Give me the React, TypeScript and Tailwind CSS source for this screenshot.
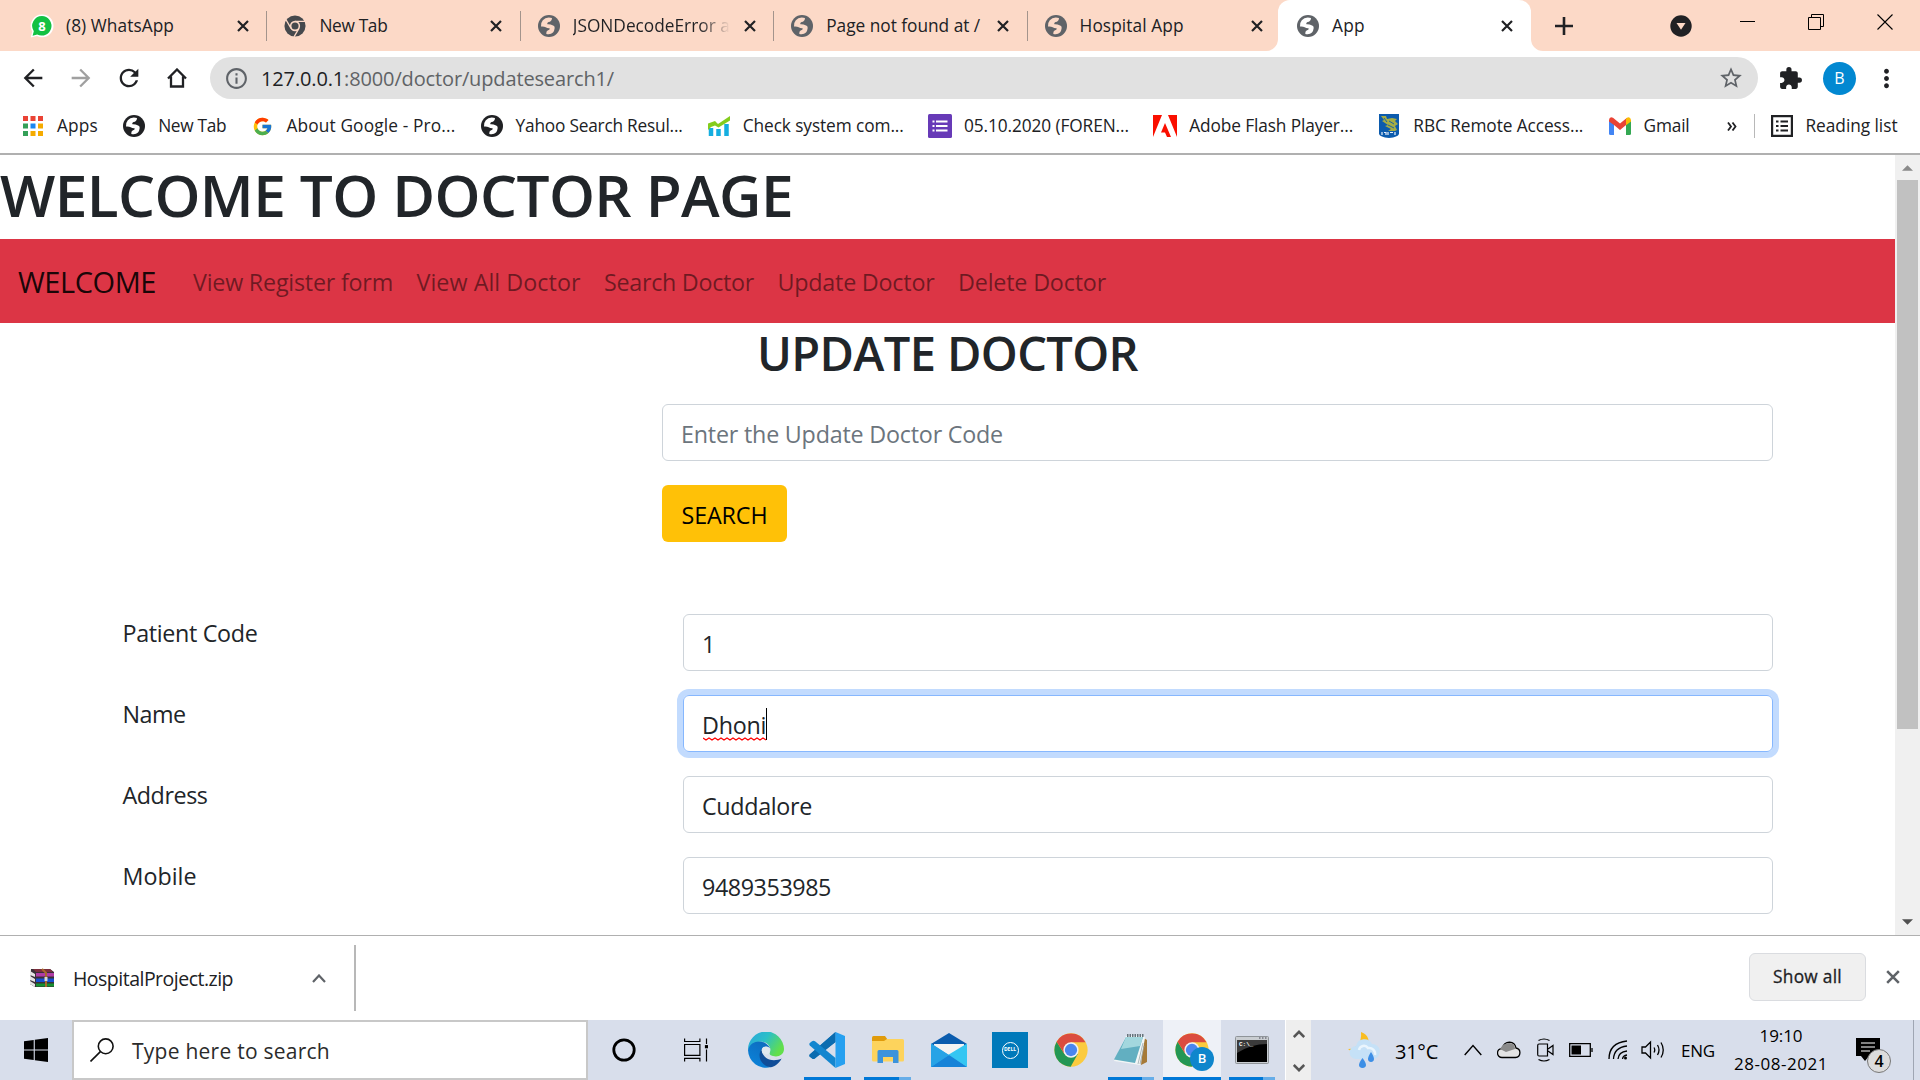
import React, { useLayoutEffect, useRef, useState } from "react";
import { MdExtension, MdStarBorder, MdInfoOutline, MdArrowBack, MdArrowForward, MdRefresh, MdMoreVert } from "react-icons/md";
import { FcGoogle } from "react-icons/fc";

/** Single line of text whose tracking is adjusted so that it fills `w` pixels. */
function Fit({ text, w, className = "" }: { text: React.ReactNode; w: number; className?: string }) {
  const ref = useRef<HTMLSpanElement>(null);
  const [tracking, setTracking] = useState(0);
  useLayoutEffect(() => {
    const el = ref.current;
    if (!el) return;
    const n = (el.textContent || "").length;
    setTracking((w - el.getBoundingClientRect().width) / n);
  }, []);
  return (
    <span className={`block shrink-0 whitespace-nowrap ${className}`} style={{ width: w }}>
      <span ref={ref} className="inline-block" style={{ letterSpacing: tracking }}>
        {text}
      </span>
    </span>
  );
}

function Cross({ className }: { className: string }) {
  return (
    <svg viewBox="0 0 12 12" className={className} fill="none" stroke="currentColor">
      <path d="M1 1 11 11M11 1 1 11" />
    </svg>
  );
}

function Globe({ className, land }: { className: string; land: string }) {
  return (
    <svg viewBox="0 0 24 24" className={`h-6 w-6 shrink-0 ${className}`}>
      <circle cx="12" cy="12" r="11" fill="currentColor" />
      <path d="M15 4Q9 2.500 5.800 6.200 3.500 9 4 12.500 7 12.200 8.700 13.300 10.300 14.500 12.700 14.300 13 16 10.600 16.600 9 17.300 9.300 20 13.500 21 16 18.600 17.300 17 17.600 14.500 18 11.800 15.500 11.200 13.500 10 10.400 10.200 9.600 9 11.500 8 14.800 7.700 15 4Z" fill={land} />
    </svg>
  );
}

function WhatsApp() {
  return (
    <svg viewBox="0 0 24 24" className="h-6 w-6 shrink-0">
      <path d="M12 .5A11.3 11.3 0 0 1 23.500 12 11.300 11.300 0 0 1 12 23.200a11 11 0 0 1-5-1.200L.8 23.500 2.200 17.500A11.300 11.300 0 0 1 12 .5Z" fill="#fff" />
      <path d="M12 2a9.800 9.800 0 1 1-4.800 18.500L2.600 21.700 3.800 17.200A9.800 9.800 0 0 1 12 2Z" fill="#12c143" />
      <text x="12" y="16.600" textAnchor="middle" fontSize="13" fontWeight="700" fill="#fff" fontFamily="Open Sans, sans-serif">8</text>
    </svg>
  );
}

function ChromeMono() {
  return (
    <svg viewBox="0 0 24 24" className="h-[22px] w-[22px] shrink-0">
      <circle cx="12" cy="12" r="11.500" fill="#46494d" />
      <circle cx="12" cy="12" r="5.600" fill="#fcd9c7" />
      <circle cx="12" cy="12" r="3.900" fill="#46494d" />
      <path d="M12 7h11M7.700 14.500 2.200 5.200M16.300 14.500 11 23.700" stroke="#fcd9c7" strokeWidth="1.500" />
    </svg>
  );
}

function Chrome({ className }: { className: string }) {
  return (
    <svg viewBox="0 0 48 48" className={className}>
      <circle cx="24" cy="24" r="23.500" fill="#fbcb3f" />
      <path d="M3.700 12.200A23.500 23.500 0 0 0 23.500 47.500L33.600 29.600 24 24 14.500 29.200Z" fill="#239754" />
      <path d="M3.700 12.200A23.500 23.500 0 0 1 44.500 12.900H24L14.600 29.200Z" fill="#db4c3f" />
      <circle cx="24" cy="24" r="10.800" fill="#f1f1f1" />
      <circle cx="24" cy="24" r="8.700" fill="#4a86ee" />
    </svg>
  );
}

const tabGlobe = <Globe className="-mx-px text-[#5f6368]" land="#fcd9c7" />;

const tabs = [
  { title: "(8) WhatsApp", w: 108, icon: <WhatsApp /> },
  { title: "New Tab", w: 68, icon: <ChromeMono /> },
  { title: "JSONDecodeError a", w: 157, icon: tabGlobe, fade: true },
  { title: "Page not found at /", w: 154, icon: tabGlobe },
  { title: "Hospital App", w: 104, icon: tabGlobe },
];

function TabStrip() {
  return (
    <div className="flex h-[51px] w-full items-center bg-[#fcd9c7] pl-[14px] text-[17.300px] text-[#202124]">
      {tabs.map((t, i) => (
        <div key={t.title} className="flex h-full w-[253.400px] shrink-0 items-center">
          <div className="ml-[17px] flex w-[22px] justify-center">{t.icon}</div>
          <div className="ml-[13px] flex w-[168px]">
            <Fit
              text={t.title}
              w={t.w}
              className={t.fade ? "bg-linear-to-r from-[#202124] from-80% to-[#fcd9c7] bg-clip-text text-transparent" : ""}
            />
          </div>
          <Cross className="ml-[3px] h-3 w-3 stroke-[2.200]" />
          {i < 4 && <div className="ml-auto h-[30px] w-px bg-[#a3948c]" />}
        </div>
      ))}
      <div className="relative -ml-[3px] flex h-full w-[253px] shrink-0 items-center rounded-t-[12px] bg-white">
        <svg viewBox="0 0 12 12" className="absolute bottom-0 -left-3 h-3 w-3"><path d="M12 0v12H0A12 12 0 0 0 12 0" fill="#fff" /></svg>
        <svg viewBox="0 0 12 12" className="absolute -right-3 bottom-0 h-3 w-3"><path d="M0 0v12h12A12 12 0 0 1 0 0" fill="#fff" /></svg>
        <Globe className="ml-[18px] text-[#5f6368]" land="#fff" />
        <Fit text="App" w={33} className="ml-[12px]" />
        <Cross className="ml-[136px] h-3 w-3 stroke-[2.200]" />
      </div>
      <svg viewBox="0 0 18 18" className="ml-[24px] h-[18px] w-[18px]" stroke="#202124" strokeWidth="2.600"><path d="M9 0v18M0 9h18" /></svg>
      <svg viewBox="0 0 22 22" className="ml-[97px] h-[22px] w-[22px]">
        <circle cx="11" cy="11" r="10.700" fill="#202124" />
        <path d="M6.500 8h9L11 14.800Z" fill="#fcd9c7" />
      </svg>
      <svg viewBox="0 0 15 15" className="mb-2 ml-[48px] h-[15px] w-[15px]" stroke="#000"><path d="M0 7.500h15" /></svg>
      <svg viewBox="0 0 16 16" className="mb-2 ml-[53px] h-4 w-4" fill="none" stroke="#000"><path d="M.5 3.500h12v12H.5ZM3.500 3.500v-3h12v12h-3" /></svg>
      <svg viewBox="0 0 16 16" className="mb-2 ml-[53px] h-4 w-4" stroke="#000" strokeWidth="1.100"><path d="M.5.5l15 15M15.500.5l-15 15" /></svg>
    </div>
  );
}

function Toolbar() {
  return (
    <div className="flex h-[54px] w-full items-center text-[#202124]">
      <MdArrowBack className="ml-[19px] h-7 w-7" />
      <MdArrowForward className="ml-5 h-7 w-7 text-[#a0a0a0]" />
      <MdRefresh className="ml-[20px] h-7 w-7" />
      <svg viewBox="0 0 20 20" className="ml-[24px] h-5 w-5" fill="none" stroke="currentColor" strokeWidth="2.300"><path d="M1 10.500 10 1.500l9 9M4 8.500v10h12v-10" /></svg>
      <div className="ml-[23px] flex h-[42px] w-[1548px] items-center rounded-full bg-[#e1e1e1]">
        <MdInfoOutline className="ml-[14px] h-[25px] w-[25px] text-[#5f6368]" />
        <Fit
          text={<>127.0.0.1<span className="text-[#606366]">:8000/doctor/updatesearch1/</span></>}
          w={353}
          className="ml-[12px] pt-[2px] text-[20px]"
        />
        <MdStarBorder className="mr-[14px] ml-auto h-[26px] w-[26px] text-[#5f6368]" />
      </div>
      <MdExtension className="ml-[20px] h-[25px] w-[25px]" />
      <div className="ml-[20px] flex h-[33px] w-[33px] items-center justify-center rounded-full bg-[#0288d1] text-[16px] text-white">B</div>
      <MdMoreVert className="ml-[16px] h-[29px] w-[29px]" />
    </div>
  );
}

const appColors = ["#ea4335", "#ea4335", "#ea4335", "#34a058", "#1a86f0", "#f5ab00", "#34a058", "#f5ab00", "#f5ab00"];

const bookmarks = [
  {
    title: "Apps", w: 41,
    icon: <svg viewBox="0 0 20 20" className="h-5 w-5">{appColors.map((c, i) => <rect key={i} x={(i % 3) * 7.500} y={Math.floor(i / 3) * 7.500} width="5" height="5" fill={c} />)}</svg>,
  },
  { title: "New Tab", w: 68, icon: <Globe className="text-[#202124]" land="#fff" /> },
  { title: "About Google - Pro...", w: 169, icon: <FcGoogle className="h-[21px] w-[21px]" /> },
  { title: "Yahoo Search Resul...", w: 167, icon: <Globe className="text-[#202124]" land="#fff" /> },
  {
    title: "Check system com...", w: 161,
    icon: <svg viewBox="0 0 22 20" className="h-[20px] w-[22px]"><path d="M3 12v8M10.500 13v7M18.500 8v12" stroke="#15aee0" strokeWidth="4.500" /><path d="M0 7.500 7 5l3 3L22 0v4.500L10.500 11.500 7 9.500 3 11 0 14Z" fill="#84cc1d" /></svg>,
  },
  {
    title: "05.10.2020 (FOREN...", w: 165,
    icon: <svg viewBox="0 0 24 24" className="h-6 w-6"><rect width="24" height="24" rx="1.500" fill="#673ab7" /><path d="M4.500 7.500h2M8 7.500h11.500M4.500 12h2M8 12h11.500M4.500 16.500h2M8 16.500h11.500" stroke="#fff" strokeWidth="2" /></svg>,
  },
  {
    title: "Adobe Flash Player...", w: 164,
    icon: <svg viewBox="0 0 24 22" className="h-[22px] w-6" fill="#fa0f00"><path d="M0 0h9L0 22ZM15 0h9v22ZM12 8l6 14h-4l-2-4.500H8Z" /></svg>,
  },
  {
    title: "RBC Remote Access...", w: 170,
    icon: <svg viewBox="0 0 20 24" className="h-6 w-5"><path d="M0 0h20v20q-1 3-10 4-9-1-10-4Z" fill="#0c5bad" /><path d="M2 2l5 0 1 3 5-1 5 1-2 2 3 3-3 2 2 4-2 1H9l3-2-6-3 3-1-6-4 2-1Z" fill="#a6ad45" /><path d="M5 4l3 4M10 7l5 3M9 11l6 3" stroke="#0c5bad" strokeWidth=".9" /><path d="M3 18v3M5 18.500h2v2.500M9 18v3M11 18.500h3M16 18v3" stroke="#e7effa" strokeWidth="1.200" fill="none" /></svg>,
  },
  {
    title: "Gmail", w: 46,
    icon: <svg viewBox="0 0 22 18" className="h-[18px] w-[22px]"><path d="M0 3 5 6.500V18H1.500Q0 18 0 16.500Z" fill="#4285f4" /><path d="M22 3 17 6.500V18h3.500q1.500 0 1.500-1.500Z" fill="#34a853" /><path d="M0 3Q.5-1 4 .7l7 5.800 7-5.800v6.500L11 13 5 8 0 4.500Z" fill="#ea4335" /><path d="M17 1.500Q21-1.500 22 3v1.500l-5 3.800Z" fill="#fbbc04" /></svg>,
  },
];

function BookmarksBar() {
  return (
    <div className="flex h-[48px] w-full items-center pb-[6px] text-[17.300px] text-[#202124]">
      <div className="flex gap-[23.200px] pl-[20px]">
        {bookmarks.map((b, i) => (
          <div key={i} className="flex items-center gap-[11px]">
            <div className="flex w-[26px] justify-center">{b.icon}</div>
            <Fit text={b.title} w={b.w} />
          </div>
        ))}
      </div>
      <svg viewBox="0 0 10 9" className="ml-[37px] h-[9px] w-[10px]" fill="none" stroke="#202124" strokeWidth="1.800"><path d="M1 .5l3 4-3 4M5.500.5l3 4-3 4" /></svg>
      <div className="ml-[17px] h-6 w-px bg-[#b8b8b8]" />
      <svg viewBox="0 0 22 22" className="ml-[16px] h-[22px] w-[22px]" fill="none" stroke="#202124" strokeWidth="2.200"><path d="M1.100 1.100h19.800v19.800H1.100ZM5 6.500h2.500M9.500 6.500H17M5 11h2.500M9.500 11H17M5 15.500h2.500M9.500 15.500H17" /></svg>
      <Fit text="Reading list" w={92} className="ml-[13px]" />
    </div>
  );
}

const links: [string, number][] = [["View Register form", 200], ["View All Doctor", 164], ["Search Doctor", 150], ["Update Doctor", 157], ["Delete Doctor", 148]];

const fields = [
  { label: "Patient Code", lw: 135, value: "1", vw: 13 },
  { label: "Name", lw: 63, value: "Dhoni", vw: 64, focus: true },
  { label: "Address", lw: 85, value: "Cuddalore", vw: 110 },
  { label: "Mobile", lw: 74, value: "9489353985", vw: 129 },
];

function Page() {
  return (
    <div className="flex h-[780px] w-full overflow-hidden text-[#212529]">
      <main className="h-full w-[1895px] shrink-0 text-[23.300px]">
        <div className="flex h-[84px] items-center pb-[7px]">
          <Fit text="WELCOME TO DOCTOR PAGE" w={793} className="text-[58.500px] leading-[76px] font-semibold" />
        </div>
        <nav className="flex h-[84px] items-center bg-[#dc3545] pt-[2px]">
          <Fit text="WELCOME" w={138} className="ml-[18px] text-[29px] text-black/90" />
          <div className="ml-[37px] flex gap-[23.500px] text-black/50">
            {links.map(([t, w]) => <Fit key={t} text={t} w={w} />)}
          </div>
        </nav>
        <div className="flex h-[81px] justify-center">
          <Fit text="UPDATE DOCTOR" w={381} className="text-[47px] leading-[60px] font-semibold" />
        </div>
        <div className="ml-[662px] flex h-[57px] w-[1111px] items-center rounded-[6px] border border-[#ced4da] pt-[3px] pl-[18px] text-[#6c757d]">
          <Fit text="Enter the Update Doctor Code" w={322} />
        </div>
        <div className="mt-6 ml-[662px] flex h-[57px] w-[125px] items-center rounded-[6px] bg-[#ffc107] pt-[3px] pl-[19.500px] text-black">
          <Fit text="SEARCH" w={86} />
        </div>
        <div className="mt-[72px] flex flex-col gap-6">
          {fields.map((f) => (
            <div key={f.label} className="flex h-[57px] pl-[122.500px]">
              <div className="w-[560.500px] pt-[2px]"><Fit text={f.label} w={f.lw} /></div>
              <div className={`flex w-[1090px] items-center rounded-[6px] border pt-[3px] pl-[18px] ${f.focus ? "border-[#86b7fe] ring-[6px] ring-[#c2dbfe]" : "border-[#ced4da]"}`}>
                <div className="relative">
                  <Fit text={f.value} w={f.vw} />
                  {f.focus && (
                    <>
                      <svg viewBox="0 0 64 4" className="absolute bottom-[1px] left-[1px] h-1 w-16" fill="none" stroke="#f00" strokeWidth="1.300">
                        <path d="M0 1l3 2 3-2 3 2 3-2 3 2 3-2 3 2 3-2 3 2 3-2 3 2 3-2 3 2 3-2 3 2 3-2 3 2 3-2 3 2 3-2 3 2" />
                      </svg>
                      <div className="absolute top-0 left-[64px] h-8 w-px bg-black" />
                    </>
                  )}
                </div>
              </div>
            </div>
          ))}
        </div>
      </main>
      <aside className="flex w-[25px] flex-col items-center bg-[#f0f0f0]">
        <div className="flex h-[25px] items-center"><svg viewBox="0 0 12 6" className="h-[6px] w-[11px]"><path d="M0 6 6 0l6 6Z" fill="#8a8a8a" /></svg></div>
        <div className="h-[549px] w-[21px] bg-[#c1c1c1]" />
        <div className="mt-auto flex h-[27px] items-center"><svg viewBox="0 0 12 6" className="h-[6px] w-[11px]"><path d="M0 0 6 6l6-6Z" fill="#505050" /></svg></div>
      </aside>
    </div>
  );
}

function Downloads() {
  return (
    <div className="flex h-[85px] w-full items-center border-t border-[#b0b0b0] text-[#202124]">
      <svg viewBox="0 0 24 20" className="ml-[30px] h-5 w-6">
        <path d="M1 1h19l4 3v15H5L0 16Z" fill="#3a3038" />
        <path d="M0 3l5 3v3L0 7ZM0 8l5 3v3L0 12ZM0 13l5 3v3L0 16Z" fill="#e5e5e5" />
        <path d="M3 1h17l3 3H6Z" fill="#7b2e3c" />
        <path d="M6 5h18v3.500H6Z" fill="#b03ba5" />
        <path d="M6 10.500h18V14H6Z" fill="#174fd0" />
        <path d="M6 15.500h18v3H6Z" fill="#149130" />
        <path d="M12 1l4 4v14" stroke="#a86a2c" strokeWidth="2" fill="none" />
        <path d="M14.500 9h3v4h-3Z" fill="#d8d8d8" />
      </svg>
      <Fit text="HospitalProject.zip" w={160} className="ml-[19px] pt-[2px] text-[19.500px]" />
      <svg viewBox="0 0 14 9" className="ml-[79px] h-[9px] w-[14px]" fill="none" stroke="#5f6368" strokeWidth="2.200"><path d="M1 8l6-6.500L13 8" /></svg>
      <div className="ml-[28px] h-[66px] w-[2px] bg-[#b8b8b8]" />
      <div className="mr-5 mb-[2px] ml-auto flex h-[48px] w-[117px] items-center justify-center rounded-[6px] border border-[#dadce0] bg-[#f0f0f0] text-[17.300px] font-medium">
        <Fit text="Show all" w={69} className="[-webkit-text-stroke:0.3px_#202124]" />
      </div>
      <Cross className="mr-5 mb-[2px] h-[14px] w-[14px] stroke-[2.200] text-[#5f6368]" />
    </div>
  );
}

function Slot({ w, mark, light, active, children }: { w: string; mark?: string; light?: boolean; active?: boolean; children: React.ReactNode }) {
  return (
    <div className={`relative flex h-full shrink-0 items-center justify-center ${w} ${active ? "bg-[#eef1f7]" : ""}`}>
      {children}
      {mark && (
        <div className={`absolute bottom-0 flex h-[3px] justify-end bg-[#0078d7] ${mark}`}>
          {light && <div className="h-full w-3 bg-[#66ade8]" />}
        </div>
      )}
    </div>
  );
}

function Taskbar() {
  return (
    <div className="flex h-[60px] w-full items-center bg-[#d8deeb] text-[17px] text-black">
      <svg viewBox="0 0 24 24" className="ml-[24px] h-6 w-6 shrink-0"><path d="M0 3.300 9.700 2v9.400H0ZM10.800 1.800 24 0v11.400H10.800ZM0 12.500h9.700V22L0 20.700ZM10.800 12.500H24V24l-13.200-1.800Z" /></svg>
      <div className="ml-[24px] flex h-full w-[516px] shrink-0 items-center border-2 border-[#c8c8c8] bg-white">
        <svg viewBox="0 0 24 24" className="ml-4 h-6 w-6" fill="none" stroke="#111" strokeWidth="1.600"><circle cx="15.700" cy="8.300" r="7.400" /><path d="M10.400 13.600.5 23.500" /></svg>
        <Fit text="Type here to search" w={198} className="ml-[18px] pt-[4px] text-[21px] text-[#2b2b2b]" />
      </div>
      <Slot w="w-[72px]"><svg viewBox="0 0 24 24" className="h-6 w-6" fill="none" stroke="#000" strokeWidth="2.800"><circle cx="12" cy="12" r="10.200" /></svg></Slot>
      <Slot w="w-[72px]">
        <svg viewBox="0 0 24 24" className="h-6 w-6" fill="none" stroke="#000" strokeWidth="1.200"><path d="M.6.500v3h15.300V.5M.6 6.500h15.300v10.800H.6ZM.6 23.500v-3.200h15.300v3.200M22.500.5v5.500M22.500 11.500v12" /><rect x="21.500" y="7.700" width="2" height="2" fill="#000" /></svg>
      </Slot>
      <Slot w="w-[68px]">
        <svg viewBox="0 0 36 36" className="h-9 w-9">
          <defs>
            <linearGradient id="edgeTop" x1="0" x2="1" y1="0" y2=".5"><stop stopColor="#2aa5dd" /><stop offset=".5" stopColor="#2bbfc8" /><stop offset="1" stopColor="#62df4b" /></linearGradient>
            <linearGradient id="edgeMid" x1="0" x2=".6" y1="1" y2="0"><stop stopColor="#0a86dd" /><stop offset="1" stopColor="#0d6dc0" /></linearGradient>
          </defs>
          <path d="M0 18A18 18 0 0 1 36 17c0 6-6 8.500-11 7-5-1-3-3-2.500-6C22 8 6 6 0 18Z" fill="url(#edgeTop)" />
          <path d="M0 18C3 7 17 7 22 16c-7-4-10 2-9 8 1 6 6 11 10 11A18 18 0 0 1 0 18Z" fill="url(#edgeMid)" />
          <path d="M13.500 17c-5 8 0 17 9.500 18.300 5-1 9-5 10.500-8.700.5-1-.5-1-1-.8C25 29 14 27 13.500 17Z" fill="#104d98" />
          <circle cx="17.800" cy="18.500" r="4" fill="#e1e7ef" />
          <path d="M17 22c2 5 9 6 17 2.500v2C27 29.500 17 29 15 21Z" fill="#d8deeb" />
        </svg>
      </Slot>
      <Slot w="w-[54px]" mark="w-[47px]">
        <svg viewBox="0 0 36 36" className="h-9 w-9">
          <path d="M26.500 0v10L4.500 27 .5 24.500V23Z" fill="#0b6cb0" />
          <path d="M26.500 0v10L6 26.500q-1.500 1-3 0L.8 24.700q-1-1.200 0-2.400Z" fill="#0b6cb0" />
          <path d="M6 9.300 26.500 26v10L.8 13.500q-1-1.200 0-2.400L3 9.300q1.500-1 3 0Z" fill="#1386cf" />
          <path d="M26.500 0 36 4v28l-9.500 4Z" fill="#26a0f0" />
        </svg>
      </Slot>
      <Slot w="w-[67px]" mark="w-[47px]" light>
        <svg viewBox="0 0 32 28" className="h-7 w-8">
          <path d="M0 1.500Q0 0 1.500 0H13l2.500 3.500L13 6H0Z" fill="#e09b0b" />
          <path d="M0 5h12l3-2h15.500Q32 3 32 4.500V24q0 1.500-1.500 1.500h-29Q0 25.500 0 24Z" fill="#fdd35c" />
          <path d="M5.500 27V15.500q0-1.500 1.500-1.500h18q1.500 0 1.500 1.500V27H21v-6H11v6Z" fill="#3c93dc" />
        </svg>
      </Slot>
      <Slot w="w-[55px]">
        <svg viewBox="0 0 36 34" className="h-[34px] w-9">
          <path d="M0 11 18 0l18 11v5H0Z" fill="#0b5cae" />
          <path d="M3 11h30v4L18 23 3 15Z" fill="#f3f3f3" />
          <path d="M0 10.500 36 34H0Z" fill="#27a3e6" />
          <path d="M36 10.500 17 22l19 12Z" fill="#35c6f2" />
          <path d="M0 34h36L18 22Z" fill="#1683d8" />
          <path d="M0 10.500 18 22 0 34Z" fill="#27a3e6" />
        </svg>
      </Slot>
      <Slot w="w-[68px]">
        <div className="flex h-9 w-9 items-center justify-center bg-[#0079ba]">
          <div className="flex h-[17px] w-[17px] items-center justify-center rounded-full border border-white text-[5px] font-bold text-white">DELL</div>
        </div>
      </Slot>
      <Slot w="w-[54px]"><Chrome className="h-[34px] w-[34px]" /></Slot>
      <Slot w="w-[65px]" mark="w-[46px]" light>
        <svg viewBox="0 0 34 32" className="h-8 w-[34px]">
          <path d="M30 4 33 6v22l-6 3Z" fill="#a67a38" />
          <path d="M12 2h18l1 2-5 27L0 27Z" fill="#f2f6f6" />
          <path d="M12 3h17l-8 26L0 25.500Z" fill="#62afc1" />
          <path d="M12 3h17l-3 9L7 15Z" fill="#a3d7de" />
          <path d="M13 1.500h17" stroke="#66737a" strokeWidth="3" strokeDasharray="1.500 1" />
          <path d="M29 9 24 30M30 12l-4 18" stroke="#9aa8ab" strokeWidth=".8" />
        </svg>
      </Slot>
      <Slot w="w-[58px]" mark="w-full" active>
        <div className="relative h-[34px] w-[34px]">
          <Chrome className="h-[34px] w-[34px]" />
          <div className="absolute top-[14px] left-[15px] flex h-6 w-6 items-center justify-center rounded-full bg-[#0f86cc] text-[13px] font-semibold text-white">B</div>
        </div>
      </Slot>
      <Slot w="w-[62px]" mark="w-[46px]" light>
        <svg viewBox="0 0 34 28" className="h-7 w-[34px]">
          <rect x=".5" y=".5" width="33" height="27" rx="1" fill="#c9cdd1" stroke="#8f9499" />
          <rect x="2" y="4" width="30" height="22" fill="#000" />
          <path d="M2 4h30v4Q16 8 2 17Z" fill="#3b3b3b" />
          <path d="M24 2h1.500M27 2h1.500M30 2h1.500" stroke="#445" />
          <text x="4" y="10" fontSize="6" fontWeight="700" fill="#fff" fontFamily="Liberation Mono, monospace">C:\_</text>
        </svg>
      </Slot>
      <div className="ml-[2px] flex h-full w-[26px] shrink-0 flex-col items-center justify-between border-l border-white bg-[#eee] pt-[10px] pb-[8px]">
        <svg viewBox="0 0 12 8" className="h-2 w-3" fill="none" stroke="#555" strokeWidth="2.500"><path d="M.8 7 6 1.800 11.200 7" /></svg>
        <svg viewBox="0 0 12 8" className="h-2 w-3" fill="none" stroke="#555" strokeWidth="2.500"><path d="M.8 1 6 6.200 11.200 1" /></svg>
      </div>
      <svg viewBox="0 0 34 36" className="ml-[37px] h-9 w-[34px] shrink-0">
        <path d="M13 0c8 3 9 9 6 15S4 21 0 17c9 0 14-7 13-17Z" fill="#f9bd22" />
        <path d="M8 27a6.500 6.500 0 0 1 0-13 8.500 8.500 0 0 1 16-2 7.600 7.600 0 0 1 2 15Z" fill="#c5e1f7" />
        <path d="M11 18a5 5 0 0 1 9-2 6 6 0 0 1 7 7" fill="none" stroke="#eaf5fd" strokeWidth="2.500" />
        <path d="M14.500 26q7 9 0 10-7-1 0-10ZM23 20q6 9 0 10-6-1 0-10Z" fill="#3d8fe6" />
      </svg>
      <Fit text="31°C" w={43} className="ml-[13px] pt-[4px] text-[20px]" />
      <svg viewBox="0 0 18 12" className="ml-[26px] h-3 w-[18px] shrink-0" fill="none" stroke="#000" strokeWidth="1.400"><path d="M.7 11 9 1.500 17.300 11" /></svg>
      <svg viewBox="0 0 24 18" className="ml-[15px] h-[18px] w-6 shrink-0">
        <path d="M5 16.500a4.500 4.500 0 0 1 0-9Q7 1.500 12.500 1.200 18 1.500 19 7a4.800 4.800 0 0 1-.5 9.500Z" fill="#e3e3e3" stroke="#000" strokeWidth="1.300" />
        <path d="M3 8Q6 2 12 2t6 6l-9 3Z" fill="#8a8a8a" />
      </svg>
      <svg viewBox="0 0 17 26" className="ml-[16px] h-[26px] w-[17px] shrink-0" fill="none" stroke="#000" strokeWidth="1.200"><path d="M1.500 3.500Q7 .5 12.500 3.500M1.500 22.500q5.500 3 11 0M2 7h8.500v12H2Q.7 19 .7 17.500v-9Q.7 7 2 7ZM11 12l5-3.500v9L11 14" /></svg>
      <svg viewBox="0 0 24 14" className="ml-[15px] h-[14px] w-6 shrink-0" fill="none" stroke="#000" strokeWidth="1.300"><path d="M.7.700h20.600v12.600H.7ZM23 5v4" /><rect x="2.500" y="2.500" width="9.500" height="9" fill="#000" stroke="none" /></svg>
      <svg viewBox="0 0 20 20" className="ml-[15px] h-5 w-5 shrink-0" fill="none" stroke="#000" strokeWidth="1.300"><path d="M1 19Q1 3 19 1M5.500 19Q6 7.500 19 6M10 19q.5-7 9-8M14.500 19q.5-3.500 4.500-4" /><circle cx="17.500" cy="18" r="1.500" fill="#000" stroke="none" /></svg>
      <svg viewBox="0 0 24 20" className="ml-[13px] h-5 w-6 shrink-0" fill="none" stroke="#000" strokeWidth="1.300"><path d="M1 7v6h3.500l5 5V2l-5 5ZM13 7.500q1.500 2.500 0 5M16.500 5q3 5 0 10M20 2.500q4.500 7.500 0 15" /></svg>
      <Fit text="ENG" w={34} className="ml-[16px] pt-[2px]" />
      <div className="ml-[19px] flex w-[94px] shrink-0 flex-col items-center text-[17px] leading-[28px]">
        <Fit text="19:10" w={43} />
        <Fit text="28-08-2021" w={94} />
      </div>
      <div className="relative ml-[28px] h-6 w-6 shrink-0">
        <svg viewBox="0 0 24 24" className="h-6 w-6"><path d="M0 0h24v18H13l-4 5-4-5H0Z" /><path d="M5 5h14M5 9h14M5 13h9" stroke="#fff" strokeWidth="1.200" /></svg>
        <div className="absolute top-[11px] left-[11px] flex h-6 w-6 items-center justify-center rounded-full border border-[#777] bg-[#dcdcdc] text-[16px] font-semibold">4</div>
      </div>
      <div className="mr-[6px] ml-auto h-full w-px bg-[#9fa6b3]" />
    </div>
  );
}

export default function App() {
  return (
    <div className="flex h-[1080px] w-[1920px] flex-col overflow-hidden bg-white font-['Open_Sans','Noto_Sans',sans-serif]">
      <TabStrip />
      <Toolbar />
      <BookmarksBar />
      <div className="h-[2px] w-full bg-[#b0b0b0]" />
      <Page />
      <Downloads />
      <Taskbar />
    </div>
  );
}
